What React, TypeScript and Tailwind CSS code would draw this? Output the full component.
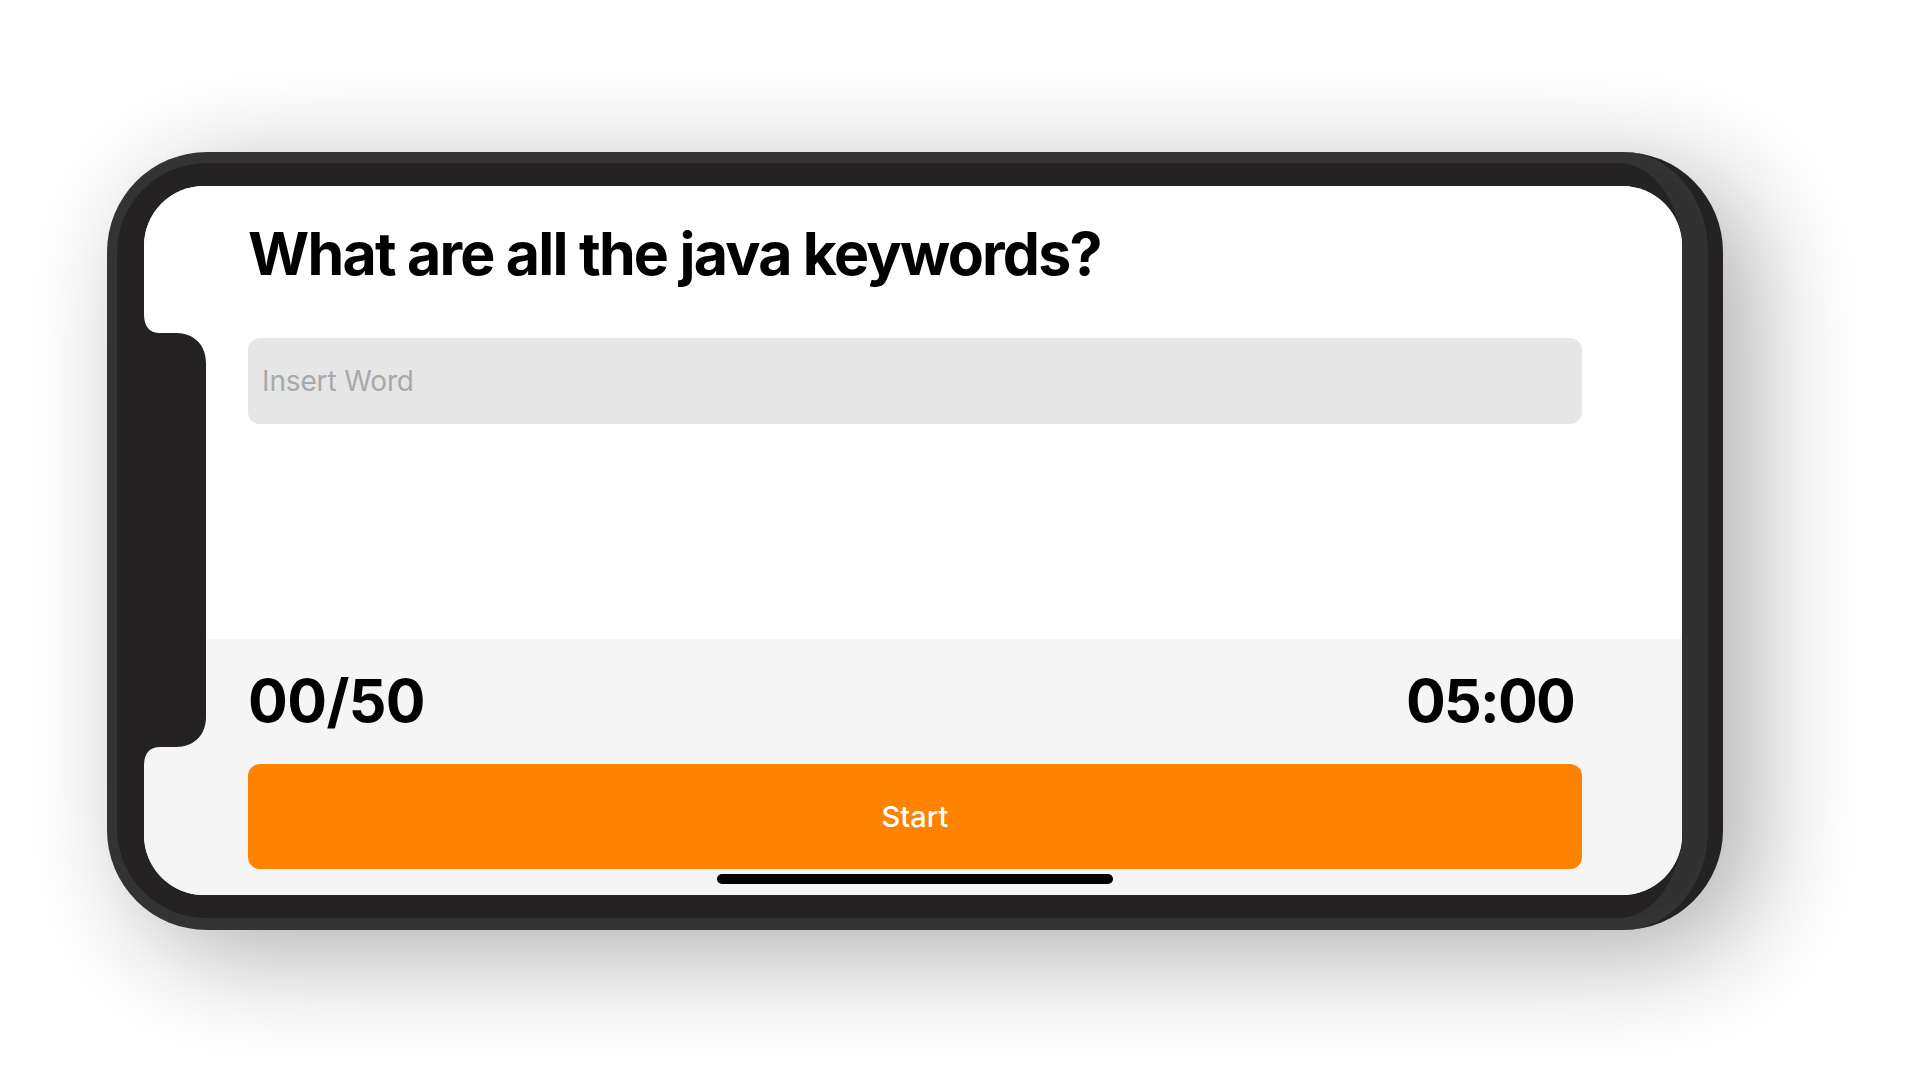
import React from "react";

export default function App() {
  return (
    <div className="w-[1920px] h-[1083px] bg-white overflow-hidden pl-[107px] pt-[152px]" style={{ fontFamily: "Inter, 'Noto Sans', sans-serif" }}>
      <div className="inline-flex rounded-[100px] pt-[11px] pl-[10px] pb-[12px] bg-[#333333] border-r-[15px] border-[#242222] shadow-[30px_24px_110px_rgba(0,0,0,0.32)]">
        <div className="flex rounded-[90px] pt-[23px] pl-[27px] pb-[23px] bg-[#242222] border-r-[26px] border-[#313131]">
          <div className="relative w-[1538px] h-[709px] rounded-[60px] overflow-hidden bg-white flex flex-col">
            {/* top section */}
            <div className="flex-1 bg-white pl-[104px] pr-[100px] pt-[32px] flex flex-col">
              <h1 className="text-[59px] leading-[72px] font-bold text-black tracking-[-0.03em]">What are all the java keywords?</h1>
              <div className="mt-[48px] h-[86px] rounded-[12px] bg-[#e6e6e6] flex items-center pl-[14px]">
                <span className="text-[28px] text-[#a9a9a9] tracking-[-0.005em]">Insert Word</span>
              </div>
            </div>
            {/* bottom section */}
            <div className="h-[256px] bg-[#f5f5f5] pl-[104px] pr-[100px] pt-[26px] flex flex-col">
              <div className="flex justify-between items-center h-[72px] pr-[8px]">
                <span className="text-[59px] leading-[72px] font-bold text-black tracking-[-0.01em]">00/50</span>
                <span className="text-[59px] leading-[72px] font-bold text-black tracking-[-0.03em]">05:00</span>
              </div>
              <button className="mt-[27px] h-[105px] w-full rounded-[12px] bg-[#ff8300] text-white text-[29px] font-medium flex items-center justify-center">
                Start
              </button>
            </div>
            {/* notch */}
            <svg className="absolute left-0 top-0" width="64" height="709" viewBox="0 0 64 709">
              <path
                d="M0 128 C0 140 5 147 16 147 L32 147 C50 147 62 159 62 177 L62 531 C62 549 50 561 32 561 L16 561 C5 561 0 568 0 580 Z"
                fill="#242222"
              />
            </svg>
            {/* home indicator */}
            <div className="absolute left-[573px] bottom-[11px] w-[396px] h-[10px] rounded-full bg-black" />
          </div>
        </div>
      </div>
    </div>
  );
}
